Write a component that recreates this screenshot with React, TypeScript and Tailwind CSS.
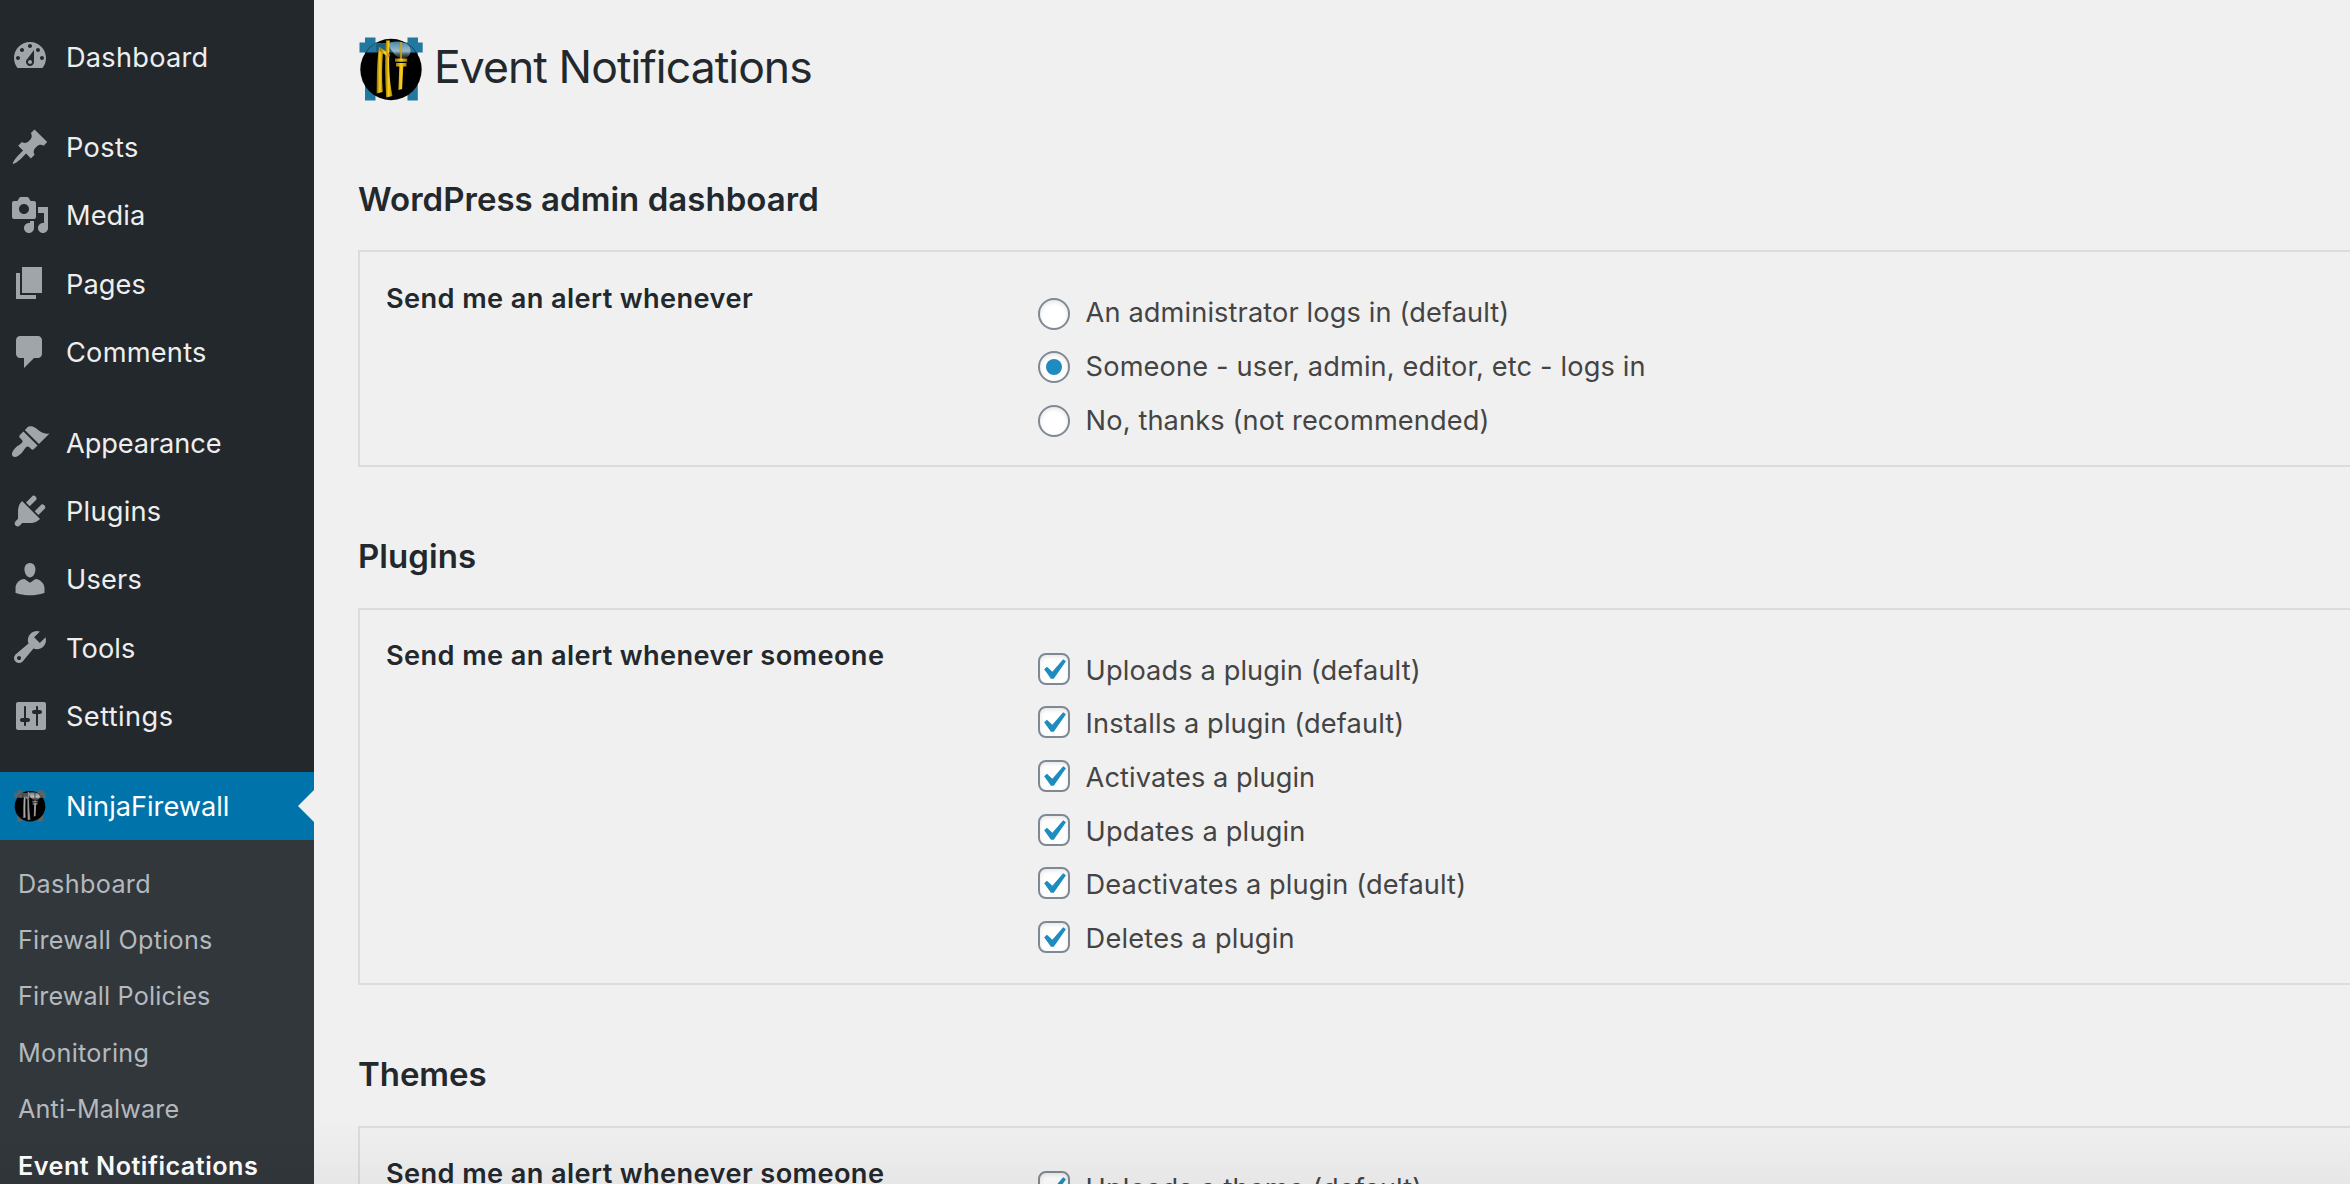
import React from 'react';

type MenuItem = { label: string; icon: string; tracking: string; gap?: boolean };

const menu: MenuItem[] = [
  {
    label: 'Dashboard',
    tracking: 'tracking-[0.24px]',
    icon: 'M3.76 16h12.48c1.1-1.37 1.76-3.11 1.76-5 0-4.42-3.58-8-8-8s-8 3.58-8 8c0 1.89.66 3.63 1.76 5zM10 4c.55 0 1 .45 1 1s-.45 1-1 1-1-.45-1-1 .45-1 1-1zM6 6c.55 0 1 .45 1 1s-.45 1-1 1-1-.45-1-1 .45-1 1-1zm8 0c.55 0 1 .45 1 1s-.45 1-1 1-1-.45-1-1 .45-1 1-1zm-5.37 5.55L12 7v6c0 1.1-.9 2-2 2s-2-.9-2-2c0-.57.24-1.08.63-1.45zM4 10c.55 0 1 .45 1 1s-.45 1-1 1-1-.45-1-1 .45-1 1-1zm12 0c.55 0 1 .45 1 1s-.45 1-1 1-1-.45-1-1 .45-1 1-1zm-5 3c0-.55-.45-1-1-1s-1 .45-1 1 .45 1 1 1 1-.45 1-1z',
  },
  {
    label: 'Posts',
    tracking: 'tracking-[0.4px]',
    gap: true,
    icon: 'M10.44 3.02l1.82-1.82 6.36 6.35-1.83 1.82c-1.05-.68-2.48-.57-3.41.36l-.75.75c-.92.93-1.04 2.35-.35 3.41l-1.83 1.82-2.41-2.41-2.8 2.79c-.42.42-3.38 2.71-3.8 2.29s1.86-3.39 2.28-3.81l2.79-2.79L4.1 9.36l1.83-1.82c1.05.69 2.48.57 3.4-.36l.75-.75c.93-.92 1.05-2.35.36-3.41z',
  },
  {
    label: 'Media',
    tracking: 'tracking-[0.09px]',
    icon: 'M13 11V4c0-.55-.45-1-1-1h-1.67L9 1H5L3.67 3H2c-.55 0-1 .45-1 1v7c0 .55.45 1 1 1h10c.55 0 1-.45 1-1zM7 4.5c1.38 0 2.5 1.12 2.5 2.5S8.38 9.5 7 9.5 4.5 8.38 4.5 7 5.62 4.5 7 4.5zM14 6h5v10.5c0 1.38-1.12 2.5-2.5 2.5S14 17.88 14 16.5s1.12-2.5 2.5-2.5c.17 0 .34.02.5.05V9h-3V6zm-4 8.05V13h2v3.5c0 1.38-1.12 2.5-2.5 2.5S7 17.88 7 16.5 8.12 14 9.5 14c.17 0 .34.02.5.05z',
  },
  {
    label: 'Pages',
    tracking: 'tracking-[0.09px]',
    icon: 'M6 15V2h10v13H6zm-1 1h8v2H3V5h2v11z',
  },
  {
    label: 'Comments',
    tracking: 'tracking-[0.24px]',
    icon: 'M5 2h9c1.1 0 2 .9 2 2v7c0 1.1-.9 2-2 2h-2l-5 5v-5H5c-1.1 0-2-.9-2-2V4c0-1.1.9-2 2-2z',
  },
  {
    label: 'Appearance',
    tracking: 'tracking-[-0.1px]',
    gap: true,
    icon: 'M14.48 11.06L7.41 3.99l1.5-1.5c.5-.56 2.3-.47 3.51.32 1.21.8 1.43 1.28 2.91 2.1 1.18.64 2.45 1.26 4.45.85zm-.71.71L6.7 4.7 4.93 6.47c-.39.39-.39 1.02 0 1.41l1.06 1.06c.39.39.39 1.03 0 1.42-.6.6-1.43 1.11-2.21 1.69-.35.26-.7.53-1.01.84C1.43 14.23.4 16.08 1.4 17.07c.99 1 2.84-.03 4.18-1.36.31-.31.58-.66.85-1.02.57-.78 1.08-1.61 1.69-2.21.39-.39 1.02-.39 1.41 0l1.06 1.06c.39.39 1.02.39 1.41 0z',
  },
  {
    label: 'Plugins',
    tracking: 'tracking-[0.25px]',
    icon: 'M13.11 4.36L9.87 7.6 8 5.73l3.24-3.24c.35-.34 1.05-.2 1.56.32.52.51.66 1.21.31 1.55zm-8 1.77l.91-1.12 9.01 9.01-1.19.84c-.71.71-2.63 1.16-3.82 1.16H6.14L4.9 17.26c-.59.59-1.54.59-2.12 0-.59-.58-.59-1.53 0-2.12l1.24-1.24v-3.88c0-1.13.4-3.19 1.09-3.89zm7.26 3.97l3.24-3.24c.34-.35 1.04-.21 1.55.31.52.51.66 1.21.31 1.55l-3.24 3.25z',
  },
  {
    label: 'Users',
    tracking: 'tracking-[0.2px]',
    icon: 'M10 9.25c-2.27 0-2.73-3.44-2.73-3.44C7 4.02 7.82 2 9.97 2c2.16 0 2.98 2.02 2.71 3.81 0 0-.41 3.44-2.68 3.44zm0 2.57L12.72 10c2.39 0 4.52 2.33 4.52 4.53v2.49s-3.65 1.13-7.24 1.13c-3.65 0-7.24-1.13-7.24-1.13v-2.49c0-2.25 1.94-4.48 4.47-4.48z',
  },
  {
    label: 'Tools',
    tracking: 'tracking-[0.1px]',
    icon: 'M16.68 9.77c-1.34 1.34-3.3 1.67-4.95.99l-5.41 6.52c-.99.99-2.59.99-3.58 0s-.99-2.59 0-3.57l6.52-5.42c-.68-1.65-.35-3.61.99-4.95 1.28-1.28 3.12-1.62 4.72-1.06l-2.89 2.89 2.82 2.82 2.86-2.87c.53 1.58.18 3.39-1.08 4.65zM3.81 16.21c.4.39 1.04.39 1.43 0 .4-.4.4-1.04 0-1.43-.39-.4-1.03-.4-1.43 0-.39.39-.39 1.03 0 1.43z',
  },
  {
    label: 'Settings',
    tracking: 'tracking-[0.42px]',
    icon: 'M18 16V4c0-.55-.45-1-1-1H4c-.55 0-1 .45-1 1v12c0 .55.45 1 1 1h13c.55 0 1-.45 1-1zM8 11h1c.55 0 1 .45 1 1s-.45 1-1 1H8v1.5c0 .28-.22.5-.5.5s-.5-.22-.5-.5V13H6c-.55 0-1-.45-1-1s.45-1 1-1h1V5.5c0-.28.22-.5.5-.5s.5.22.5.5V11zm5-2h-1c-.55 0-1-.45-1-1s.45-1 1-1h1V5.5c0-.28.22-.5.5-.5s.5.22.5.5V7h1c.55 0 1 .45 1 1s-.45 1-1 1h-1v5.5c0 .28-.22.5-.5.5s-.5-.22-.5-.5V9z',
  },
];

const submenu = [
  { label: 'Dashboard', tracking: 'tracking-[0.35px]' },
  { label: 'Firewall Options', tracking: 'tracking-[0.25px]' },
  { label: 'Firewall Policies', tracking: 'tracking-[0.14px]' },
  { label: 'Monitoring', tracking: 'tracking-[0.3px]' },
  { label: 'Anti-Malware', tracking: 'tracking-[0.14px]' },
  { label: 'Event Notifications', tracking: 'tracking-[0.49px]', current: true },
];

type Option = { label: string; tracking: string; checked?: boolean };
type Section = {
  title: string;
  titleTracking: string;
  label: string;
  kind: 'radio' | 'checkbox';
  options: Option[];
};

const sections: Section[] = [
  {
    title: 'WordPress admin dashboard',
    titleTracking: 'tracking-[0.03px]',
    label: 'Send me an alert whenever',
    kind: 'radio',
    options: [
      { label: 'An administrator logs in (default)', tracking: 'tracking-[0.12px]' },
      { label: 'Someone - user, admin, editor, etc - logs in', tracking: 'tracking-[0.15px]', checked: true },
      { label: 'No, thanks (not recommended)', tracking: 'tracking-[0.13px]' },
    ],
  },
  {
    title: 'Plugins',
    titleTracking: 'tracking-[0.05px]',
    label: 'Send me an alert whenever someone',
    kind: 'checkbox',
    options: [
      { label: 'Uploads a plugin (default)', tracking: 'tracking-[0.12px]', checked: true },
      { label: 'Installs a plugin (default)', tracking: 'tracking-[0.13px]', checked: true },
      { label: 'Activates a plugin', tracking: 'tracking-[0.08px]', checked: true },
      { label: 'Updates a plugin', tracking: 'tracking-[0.2px]', checked: true },
      { label: 'Deactivates a plugin (default)', tracking: 'tracking-[0.12px]', checked: true },
      { label: 'Deletes a plugin', tracking: 'tracking-[0.2px]', checked: true },
    ],
  },
  {
    title: 'Themes',
    titleTracking: 'tracking-[-0.05px]',
    label: 'Send me an alert whenever someone',
    kind: 'checkbox',
    options: [{ label: 'Uploads a theme (default)', tracking: 'tracking-[0.11px]', checked: true }],
  },
];

function NinjaLogo({ size, mono = false }: { size: number; mono?: boolean }) {
  const id = mono ? 'mono' : 'color';
  const plate = mono ? '#5d6468' : '#22789f';
  return (
    <svg width={size} height={size} viewBox="0 0 64 64" className="block shrink-0">
      <defs>
        <linearGradient id={`blade-${id}`} x1="0" x2="1" y1="0" y2="0">
          <stop offset="0" stopColor={mono ? '#333' : '#8a6a00'} />
          <stop offset="0.5" stopColor={mono ? '#aaa' : '#ffd21a'} />
          <stop offset="1" stopColor={mono ? '#333' : '#9a7400'} />
        </linearGradient>
        <linearGradient id={`shine-${id}`} x1="0" x2="0" y1="0" y2="1">
          <stop offset="0" stopColor={mono ? '#777777' : '#4f8fae'} stopOpacity="0.9" />
          <stop offset="0.55" stopColor={mono ? '#cccccc' : '#a9c3d0'} stopOpacity="0.9" />
          <stop offset="1" stopColor={mono ? '#555555' : '#55646c'} stopOpacity="0.3" />
        </linearGradient>
        <clipPath id={`disc-${id}`}>
          <circle cx="32" cy="32.5" r="30.5" />
        </clipPath>
      </defs>
      <path d="M6 0.500h10.500v5H48.500V0.500h10.500v5H63.700V15.500H58.800V63.500H48.500V40H16.500V63.500H6V15.500H0.500V5.500H6z" fill={plate} />
      <circle cx="32" cy="32.500" r="30.700" fill="#000" />
      <g clipPath={`url(#disc-${id})`}>
        <rect x="17" y="6" width="36" height="9.500" fill={plate} opacity="0.8" />
        <rect x="0" y="5.500" width="17" height="10" fill={plate} />
        <rect x="52" y="5.500" width="12" height="10" fill={plate} />
        <path d="M29 7C33 3 47 4 51 10C53 16 50 21 44 21.500C37 21.500 33 15 29 7z" fill={`url(#shine-${id})`} />
      </g>
      <g fill={`url(#blade-${id})`}>
        <path d="M20.200 10L24.300 13C22.800 28 22.800 42 23.800 55L17.600 56.500C18 42 17.500 24 20.200 10z" />
        <path d="M27 3.500L30.800 3.500C29.500 25 30 42 33.500 59L27.200 60.500C26 42 25.300 22 27 3.500z" />
        <path d="M20.500 10L31.200 17.500L30 20.500L20.500 14z" />
        <path d="M40.900 5h2.200v17h-2.200z" opacity="0.8" />
        <path d="M36 21.500h12.200v3.300h-12.200zM37 26h10.500v3.500h-10.500zM40.300 29.500h4l-1.200 22.500-3.700 1z" />
      </g>
    </svg>
  );
}

function Control({ kind, checked }: { kind: 'radio' | 'checkbox'; checked?: boolean }) {
  if (kind === 'radio') {
    return (
      <span className="mt-[12.4px] flex size-8 shrink-0 items-center justify-center rounded-full border-2 border-[#7e8993] bg-white shadow-[inset_0_2px_4px_rgba(0,0,0,0.1)]">
        {checked && <span className="size-4 rounded-full bg-[#1e8cbe]" />}
      </span>
    );
  }
  return (
    <span className="mt-[10px] flex size-8 shrink-0 items-center justify-center rounded-lg border-2 border-[#7e8993] bg-white shadow-[inset_0_2px_4px_rgba(0,0,0,0.1)]">
      {checked && (
        <svg width="28" height="28" viewBox="3.81 2.86 13.33 13.33" className="block shrink-0">
          <path d="M14.83 4.89l1.34.94-5.81 8.38H9.02L5.78 9.67l1.34-1.25 2.57 2.400z" fill="#1e8cbe" />
        </svg>
      )}
    </span>
  );
}

export default function App() {
  return (
    <div className="relative flex h-[1184px] w-full overflow-hidden bg-[#f0f0f0] font-['Inter','Liberation_Sans',sans-serif]">
      <nav className="flex w-[314px] shrink-0 flex-col bg-[#23282d] pt-[22px] text-[27.2px] text-[#eee]">
        {menu.map((item) => (
          <a
            key={item.label}
            className={`flex h-[68.4px] shrink-0 items-center pl-[10px] ${item.gap ? 'mt-[22px]' : ''}`}
          >
            <svg width="40" height="40" viewBox="0 0 20 20" className="block shrink-0" fill="#a0a5aa">
              <path d={item.icon} />
            </svg>
            <span className={`pt-[3px] pl-[16px] leading-[36px] whitespace-nowrap ${item.tracking}`}>
              {item.label}
            </span>
          </a>
        ))}
        <a className="mt-[22px] flex h-[68.4px] shrink-0 items-center bg-[#0073aa] pl-[14px] text-white">
          <NinjaLogo size={32} mono />
          <span className="grow pt-[2px] pl-[20px] leading-[36px] whitespace-nowrap">
            NinjaFirewall
          </span>
          <svg width="16" height="32" viewBox="0 0 16 32" className="block shrink-0">
            <path d="M16 0v32L0 16z" fill="#f0f0f0" />
          </svg>
        </a>
        <div className="flex grow flex-col bg-[#32373c] pt-[16px] text-[25.2px] text-[#b4b9be]">
          {submenu.map((item) => (
            <a
              key={item.label}
              className={`flex h-[56.4px] shrink-0 items-center pl-[18px] whitespace-nowrap ${item.tracking} ${
                item.current ? 'font-semibold text-white' : ''
              }`}
            >
              {item.label}
            </a>
          ))}
        </div>
      </nav>

      <main className="min-w-0 grow pl-[44px]">
        <header className="flex h-[109.5px] items-start pt-[37px] pl-px">
          <NinjaLogo size={64} />
          <h1 className="pl-[11px] text-[44.5px] leading-[60px] tracking-[-0.94px] whitespace-nowrap text-[#23282d]">
            Event Notifications
          </h1>
        </header>

        {sections.map((section) => (
          <section key={section.title}>
            <h2
              className={`flex h-[140.7px] items-start pt-[70.05px] text-[33px] leading-[38px] font-semibold whitespace-nowrap text-[#23282d] ${section.titleTracking}`}
            >
              {section.title}
            </h2>
            <div className="flex border-2 border-r-0 border-[#dcdcdc] pt-[33.200px] pb-[18.800px] text-[27.2px]">
              <div className="-mt-[4.8px] w-[678px] shrink-0 pl-[26px] leading-[36px] font-semibold tracking-[0.39px] whitespace-nowrap text-[#23282d]">
                {section.label}
              </div>
              <div className="flex flex-col text-[#444]">
                {section.options.map((option) => (
                  <label key={option.label} className="flex h-[53.6px] shrink-0 items-start">
                    <Control kind={section.kind} checked={option.checked} />
                    <span className={`pl-[15.600px] leading-[55px] whitespace-nowrap ${option.tracking}`}>
                      {option.label}
                    </span>
                  </label>
                ))}
              </div>
            </div>
          </section>
        ))}
      </main>

      <div className="pointer-events-none absolute inset-x-0 bottom-0 h-[64px] bg-linear-to-b from-transparent to-black/4" />
    </div>
  );
}
